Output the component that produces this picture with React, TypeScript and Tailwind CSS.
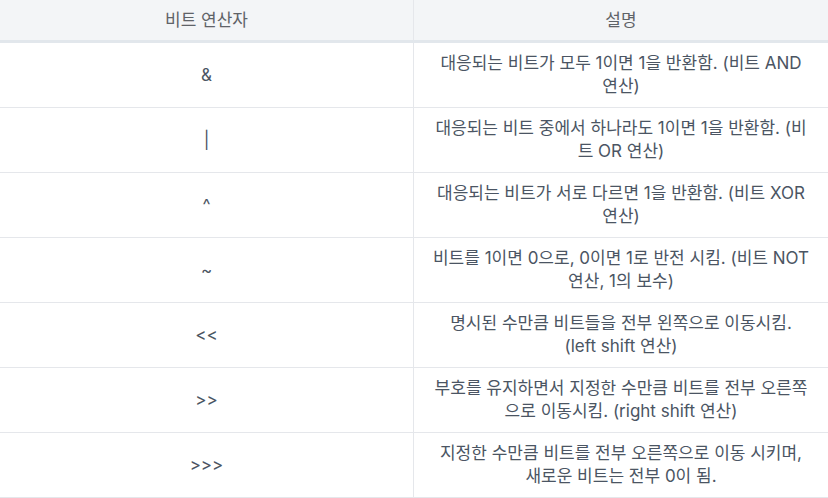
const rows = [
  { op: "&", desc: ["대응되는 비트가 모두 1이면 1을 반환함. (비트 AND", "연산)"] },
  { op: "|", desc: ["대응되는 비트 중에서 하나라도 1이면 1을 반환함. (비", "트 OR 연산)"] },
  { op: "^", desc: ["대응되는 비트가 서로 다르면 1을 반환함. (비트 XOR", "연산)"] },
  { op: "~", desc: ["비트를 1이면 0으로, 0이면 1로 반전 시킴. (비트 NOT", "연산, 1의 보수)"] },
  { op: "<<", desc: ["명시된 수만큼 비트들을 전부 왼쪽으로 이동시킴.", "(left shift 연산)"] },
  { op: ">>", desc: ["부호를 유지하면서 지정한 수만큼 비트를 전부 오른쪽", "으로 이동시킴. (right shift 연산)"] },
  { op: ">>>", desc: ["지정한 수만큼 비트를 전부 오른쪽으로 이동 시키며,", "새로운 비트는 전부 0이 됨."] },
];

export default function App() {
  return (
    <div
      className="w-[828px] h-[498px] overflow-hidden bg-white text-[17px] leading-[23px] text-[#4b5563]"
      style={{ fontFamily: 'Inter, "Noto Sans CJK KR", sans-serif' }}
    >
      <div className="grid grid-cols-[414px_414px] bg-[#f3f5f7] border-b-[3px] border-[#e2e7ec] text-[#5f6368]">
        <div className="h-[40px] flex items-center justify-center border-r border-[#e5e7eb]">비트 연산자</div>
        <div className="h-[40px] flex items-center justify-center">설명</div>
      </div>
      {rows.map((row) => (
        <div key={row.op} className="grid grid-cols-[414px_414px] border-b border-[#e5e7eb]">
          <div className="h-[64px] flex items-center justify-center border-r border-[#e5e7eb]">{row.op}</div>
          <div className="h-[64px] flex flex-col items-center justify-center text-center whitespace-nowrap">
            {row.desc.map((line) => (
              <span key={line}>{line}</span>
            ))}
          </div>
        </div>
      ))}
    </div>
  );
}
